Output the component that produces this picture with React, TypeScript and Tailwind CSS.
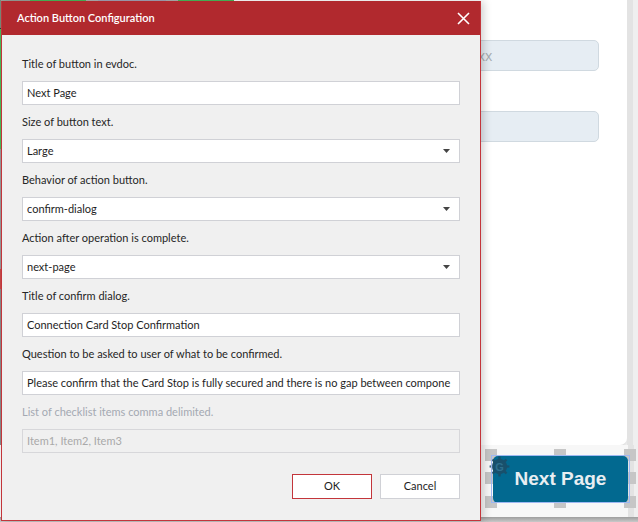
import React from "react";

const gearPath = (() => {
  const cx = 10.5, cy = 10.5, teeth = 8, rOut = 10, rIn = 7.6;
  const pts: string[] = [];
  for (let i = 0; i < teeth; i++) {
    const a = (i / teeth) * Math.PI * 2;
    const step = (Math.PI * 2) / teeth;
    const angs = [a - step * 0.22, a - step * 0.14, a + step * 0.14, a + step * 0.22];
    const rads = [rIn, rOut, rOut, rIn];
    angs.forEach((t, k) => {
      pts.push(`${(cx + rads[k] * Math.cos(t)).toFixed(2)},${(cy + rads[k] * Math.sin(t)).toFixed(2)}`);
    });
    const mid = a + step * 0.5;
    pts.push(`${(cx + rIn * Math.cos(mid)).toFixed(2)},${(cy + rIn * Math.sin(mid)).toFixed(2)}`);
  }
  return "M" + pts.join(" L") + " Z";
})();

function Label({ children, muted }: { children: React.ReactNode; muted?: boolean }) {
  return (
    <div className={`text-[11px] leading-[16px] mb-[9px] ${muted ? "text-[#a4a9b2]" : "text-[#262626]"}`}>
      {children}
    </div>
  );
}

function TextBox({ value, disabled }: { value: string; disabled?: boolean }) {
  return (
    <div
      className={`h-[24px] border flex items-center pl-[4px] text-[11px] whitespace-nowrap overflow-hidden ${
        disabled ? "bg-[#f0f0f0] border-[#d7d7da] text-[#a9a9a9]" : "bg-white border-[#d0d1d6] text-[#1e1e1e]"
      }`}
    >
      {value}
    </div>
  );
}

function SelectBox({ value }: { value: string }) {
  return (
    <div className="h-[24px] border border-[#d0d1d6] bg-white flex items-center justify-between pl-[4px] pr-[9px] text-[11px] text-[#1e1e1e]">
      <span>{value}</span>
      <svg width="7" height="4" viewBox="0 0 7 4">
        <path d="M0 0 L7 0 L3.5 4 Z" fill="#444" />
      </svg>
    </div>
  );
}

function Field({ children }: { children: React.ReactNode }) {
  return <div className="flex flex-col">{children}</div>;
}

export default function App() {
  const handleCentersX = [491, 560, 630];
  const handleCentersY = [10, 33, 57];
  return (
    <div className="w-[638px] h-[522px] relative overflow-hidden bg-[#f5f5f5] flex flex-col" style={{ fontFamily: "Lato, 'Liberation Sans', sans-serif" }}>
      {/* background page */}
      <div className="flex h-[445px]">
        <div className="w-[627px] h-full bg-white rounded-br-[7px] shadow-[0_2px_4px_rgba(0,0,0,0.12)] flex">
          <div className="w-[1px] h-full flex flex-col">
            <div className="h-[28px] bg-[#7a8a7a]" />
            <div className="h-[1px] bg-[#333]" />
            <div className="h-[120px] bg-[#4cbb5a]" />
            <div className="h-[120px] bg-[#9a9a9a]" />
            <div className="h-[20px] bg-[#c94a4a]" />
            <div className="flex-1 bg-[#8a8a8a]" />
          </div>
          <div className="flex-1 flex flex-col">
            <div className="h-[1px] flex">
              <div className="w-[29px] bg-[#9aa29a]" />
              <div className="w-[56px] bg-[#4cbb5a]" />
              <div className="w-[12px] bg-[#b0b0b0]" />
              <div className="w-[68px] bg-[#a5a3b5]" />
              <div className="w-[12px] bg-[#b0b0b0]" />
              <div className="w-[56px] bg-[#4cbb5a]" />
            </div>
            <div className="pt-[39px] pr-[28px] pl-[320px] flex flex-col gap-[40px]">
              <div className="h-[31px] rounded-[5px] bg-[#e6edf3] border border-[#d0d9e0] flex items-center pl-[141px] text-[14px] text-[#a8adb2]" style={{ fontFamily: "'Open Sans', sans-serif" }}>
                xxxx
              </div>
              <div className="h-[31px] rounded-[5px] bg-[#e6edf3] border border-[#d0d9e0]" />
            </div>
          </div>
        </div>
        <div className="flex-1 flex">
          <div className="w-[6px] bg-[#e3e3e3]" />
          <div className="flex-1 bg-[#efefef]" />
        </div>
      </div>
      <div className="h-[72px] relative flex">
        <div className="flex-1 bg-[#f7f7f7] pl-[493px] pt-[11px]">
          {handleCentersY.map((cy) =>
            handleCentersX.map((cx) =>
              cy === 33 && cx === 560 ? null : (
                <div
                  key={`${cx}-${cy}`}
                  className="absolute w-[12px] h-[12px] bg-[#c6c6c6]"
                  style={{ left: cx - 6, top: cy - 6 }}
                />
              )
            )
          )}
          <div className="relative w-[135px] h-[47px] rounded-[5px] bg-[#026990] flex items-center justify-center">
            <span className="text-[19px] font-bold text-[#e8eef2]" style={{ fontFamily: "'Liberation Sans', Arial, sans-serif" }}>
              Next Page
            </span>
            <svg className="absolute left-[-4px] top-[0px]" width="21" height="21" viewBox="0 0 21 21">
              <path d={gearPath} fill="#1c4c66" fillOpacity="0.85" />
              <text x="10.5" y="14.5" textAnchor="middle" fontSize="11" fontWeight="bold" fill="#2d6f8e" fontFamily="'Liberation Sans', Arial, sans-serif">G</text>
            </svg>
          </div>
          <div className="absolute left-[491px] top-[10px] w-[139px] h-[48px] border border-[#9fb8f2] pointer-events-none" />
        </div>
        <div className="w-[11px] flex">
          <div className="w-[6px] bg-[#e3e3e3]" />
          <div className="flex-1 bg-[#efefef]" />
        </div>
      </div>
      <div className="flex-1 bg-gradient-to-b from-[#9e9e9e] to-[#c9c9c9]" />

      {/* dialog */}
      <div className="absolute left-[1px] top-[1px] w-[480px] h-[520px] border-x border-b border-[#c3353b] bg-[#f0f0f0] flex flex-col shadow-[3px_0_8px_rgba(0,0,0,0.18)]">
        <div className="h-[34px] bg-[#b1292e] flex items-center justify-between pl-[15px] pr-[10px]">
          <span className="text-white text-[11px] font-semibold">Action Button Configuration</span>
          <svg width="13" height="13" viewBox="0 0 13 13">
            <path d="M1 1 L12 12 M12 1 L1 12" stroke="white" strokeWidth="1.6" />
          </svg>
        </div>
        <div className="pt-[21px] px-[20px] flex flex-col gap-[9px]">
          <Field>
            <Label>Title of button in evdoc.</Label>
            <TextBox value="Next Page" />
          </Field>
          <Field>
            <Label>Size of button text.</Label>
            <SelectBox value="Large" />
          </Field>
          <Field>
            <Label>Behavior of action button.</Label>
            <SelectBox value="confirm-dialog" />
          </Field>
          <Field>
            <Label>Action after operation is complete.</Label>
            <SelectBox value="next-page" />
          </Field>
          <Field>
            <Label>Title of confirm dialog.</Label>
            <TextBox value="Connection Card Stop Confirmation" />
          </Field>
          <Field>
            <Label>Question to be asked to user of what to be confirmed.</Label>
            <TextBox value="Please confirm that the Card Stop is fully secured and there is no gap between compone" />
          </Field>
          <Field>
            <Label muted>List of checklist items comma delimited.</Label>
            <TextBox value="Item1, Item2, Item3" disabled />
          </Field>
          <div className="flex justify-end gap-[8px] mt-[12px]">
            <button className="w-[80px] h-[25px] bg-white border border-[#c3353b] text-[11px] text-[#1e1e1e]">OK</button>
            <button className="w-[80px] h-[25px] bg-white border border-[#d0d1d6] text-[11px] text-[#1e1e1e]">Cancel</button>
          </div>
        </div>
      </div>
    </div>
  );
}
